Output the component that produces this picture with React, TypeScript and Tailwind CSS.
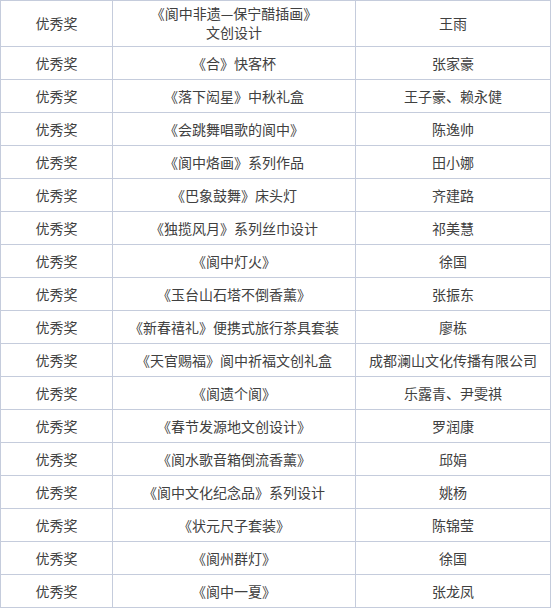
import React from 'react';

const rows: [string, string, string][] = [
  ['优秀奖', '《合》快客杯', '张家豪'],
  ['优秀奖', '《落下闳星》中秋礼盒', '王子豪、赖永健'],
  ['优秀奖', '《会跳舞唱歌的阆中》', '陈逸帅'],
  ['优秀奖', '《阆中烙画》系列作品', '田小娜'],
  ['优秀奖', '《巴象鼓舞》床头灯', '齐建路'],
  ['优秀奖', '《独揽风月》系列丝巾设计', '祁美慧'],
  ['优秀奖', '《阆中灯火》', '徐国'],
  ['优秀奖', '《玉台山石塔不倒香薰》', '张振东'],
  ['优秀奖', '《新春禧礼》便携式旅行茶具套装', '廖栋'],
  ['优秀奖', '《天官赐福》阆中祈福文创礼盒', '成都澜山文化传播有限公司'],
  ['优秀奖', '《阆遗个阆》', '乐露青、尹雯祺'],
  ['优秀奖', '《春节发源地文创设计》', '罗润康'],
  ['优秀奖', '《阆水歌音箱倒流香薰》', '邱娟'],
  ['优秀奖', '《阆中文化纪念品》系列设计', '姚杨'],
  ['优秀奖', '《状元尺子套装》', '陈锦莹'],
  ['优秀奖', '《阆州群灯》', '徐国'],
  ['优秀奖', '《阆中一夏》', '张龙凤'],
];

const cell =
  'flex items-center justify-center text-center border-r border-b border-[#c5ccdc] px-1';

export default function App() {
  return (
    <div
      className="w-[551px] bg-white text-[14px] text-[#404040] border-l border-t border-[#c5ccdc]"
      style={{ fontFamily: '"Noto Sans CJK SC", "Noto Sans", sans-serif' }}
    >
      <div className="grid grid-cols-[112px_243px_195px]">
        {/* first row wraps onto two lines */}
        <div className={`${cell} h-[46px]`}>优秀奖</div>
        <div className={`${cell} h-[46px] leading-[19px] pb-[2px]`}>
          《阆中非遗—保宁醋插画》
          <br />
          文创设计
        </div>
        <div className={`${cell} h-[46px]`}>王雨</div>

        {rows.map(([award, work, author], i) => (
          <React.Fragment key={i}>
            <div className={`${cell} h-[33px]`}>{award}</div>
            <div className={`${cell} h-[33px]`}>{work}</div>
            <div className={`${cell} h-[33px] whitespace-nowrap`}>{author}</div>
          </React.Fragment>
        ))}
      </div>
    </div>
  );
}
